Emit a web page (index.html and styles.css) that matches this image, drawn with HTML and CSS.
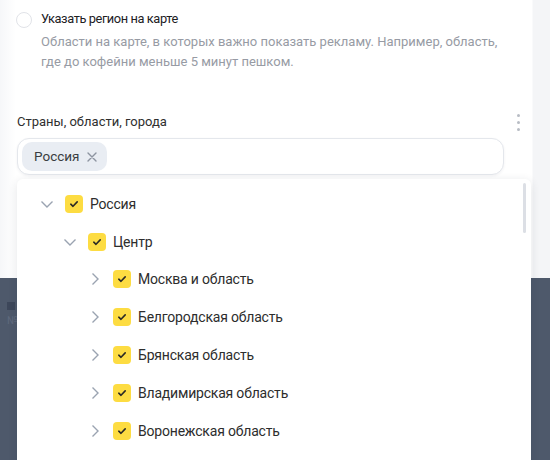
FILE: index.html
```html
<!DOCTYPE html>
<html lang="ru">
<head>
<meta charset="utf-8">
<link rel="stylesheet" href="styles.css">
</head>
<body>
<div class="page">
  <section class="form">
    <div class="radio-row">
      <span class="radio"></span>
      <div class="radio-text">
        <div class="radio-title">Указать регион на карте</div>
        <div class="radio-desc">Области на карте, в которых важно показать рекламу. Например, область, где до кофейни меньше 5 минут пешком.</div>
      </div>
    </div>
    <div class="field">
      <div class="field-head">
        <span class="field-label">Страны, области, города</span>
        <span class="kebab"><i></i><i></i><i></i></span>
      </div>
      <div class="input">
        <span class="tag">Россия <svg class="tag-x" width="10" height="10" viewBox="0 0 10 10"><path d="M1 1L9 9M9 1L1 9" stroke="currentColor" stroke-width="1.4" fill="none" stroke-linecap="round"/></svg></span>
      </div>
      <div class="dropdown">
        <div class="tree">
          <div class="row lvl0">
            <svg class="chev" width="14" height="14" viewBox="0 0 14 14"><path d="M1.5 4.5L7 10L12.5 4.5" stroke="currentColor" stroke-width="1.4" fill="none"/></svg>
            <span class="cb"><svg width="12" height="12" viewBox="0 0 12 12"><path d="M2.8 6.2L5 8.3L9.2 3.9" stroke="#2b2a26" stroke-width="1.6" fill="none" stroke-linecap="round" stroke-linejoin="round"/></svg></span>
            <span class="label">Россия</span>
          </div>
          <div class="row lvl1">
            <svg class="chev" width="14" height="14" viewBox="0 0 14 14"><path d="M1.5 4.5L7 10L12.5 4.5" stroke="currentColor" stroke-width="1.4" fill="none"/></svg>
            <span class="cb"><svg width="12" height="12" viewBox="0 0 12 12"><path d="M2.8 6.2L5 8.3L9.2 3.9" stroke="#2b2a26" stroke-width="1.6" fill="none" stroke-linecap="round" stroke-linejoin="round"/></svg></span>
            <span class="label">Центр</span>
          </div>
          <div class="row lvl2">
            <svg class="chev" width="14" height="14" viewBox="0 0 14 14"><path d="M4.5 1.5L10 7L4.5 12.5" stroke="currentColor" stroke-width="1.4" fill="none"/></svg>
            <span class="cb"><svg width="12" height="12" viewBox="0 0 12 12"><path d="M2.8 6.2L5 8.3L9.2 3.9" stroke="#2b2a26" stroke-width="1.6" fill="none" stroke-linecap="round" stroke-linejoin="round"/></svg></span>
            <span class="label">Москва и область</span>
          </div>
          <div class="row lvl2">
            <svg class="chev" width="14" height="14" viewBox="0 0 14 14"><path d="M4.5 1.5L10 7L4.5 12.5" stroke="currentColor" stroke-width="1.4" fill="none"/></svg>
            <span class="cb"><svg width="12" height="12" viewBox="0 0 12 12"><path d="M2.8 6.2L5 8.3L9.2 3.9" stroke="#2b2a26" stroke-width="1.6" fill="none" stroke-linecap="round" stroke-linejoin="round"/></svg></span>
            <span class="label">Белгородская область</span>
          </div>
          <div class="row lvl2">
            <svg class="chev" width="14" height="14" viewBox="0 0 14 14"><path d="M4.5 1.5L10 7L4.5 12.5" stroke="currentColor" stroke-width="1.4" fill="none"/></svg>
            <span class="cb"><svg width="12" height="12" viewBox="0 0 12 12"><path d="M2.8 6.2L5 8.3L9.2 3.9" stroke="#2b2a26" stroke-width="1.6" fill="none" stroke-linecap="round" stroke-linejoin="round"/></svg></span>
            <span class="label">Брянская область</span>
          </div>
          <div class="row lvl2">
            <svg class="chev" width="14" height="14" viewBox="0 0 14 14"><path d="M4.5 1.5L10 7L4.5 12.5" stroke="currentColor" stroke-width="1.4" fill="none"/></svg>
            <span class="cb"><svg width="12" height="12" viewBox="0 0 12 12"><path d="M2.8 6.2L5 8.3L9.2 3.9" stroke="#2b2a26" stroke-width="1.6" fill="none" stroke-linecap="round" stroke-linejoin="round"/></svg></span>
            <span class="label">Владимирская область</span>
          </div>
          <div class="row lvl2">
            <svg class="chev" width="14" height="14" viewBox="0 0 14 14"><path d="M4.5 1.5L10 7L4.5 12.5" stroke="currentColor" stroke-width="1.4" fill="none"/></svg>
            <span class="cb"><svg width="12" height="12" viewBox="0 0 12 12"><path d="M2.8 6.2L5 8.3L9.2 3.9" stroke="#2b2a26" stroke-width="1.6" fill="none" stroke-linecap="round" stroke-linejoin="round"/></svg></span>
            <span class="label">Воронежская область</span>
          </div>
        </div>
        <div class="scrollbar"></div>
      </div>
    </div>
  </section>
  <section class="dark">
    <div class="dark-icon"></div>
    <div class="dark-text">№</div>
  </section>
</div>
</body>
</html>
```

FILE: styles.css
```css
* { box-sizing: border-box; }
html, body { margin: 0; padding: 0; }
body {
  width: 550px;
  height: 460px;
  overflow: hidden;
  background: #ffffff;
  font-family: Roboto, "Liberation Sans", sans-serif;
  font-size: 14px;
  color: #222;
}
.page { display: flex; flex-direction: column; height: 460px; }
.form {
  position: relative;
  z-index: 2;
  height: 278px;
  padding: 9px 0 0 16px;
  background: linear-gradient(90deg, #f6f7f9 0, #ffffff 16px, #ffffff 532px, #f4f5f7 533px);
}
.radio-row { display: flex; gap: 9px; }
.radio {
  flex: none;
  width: 16px; height: 16px;
  margin-top: 3px;
  border: 1px solid #e1e3e8;
  border-radius: 50%;
  background: #fff;
}
.radio-title { font-size: 12.8px; letter-spacing: -0.4px; line-height: 20px; color: #21201f; }
.radio-desc {
  margin-top: 3px;
  font-size: 13px;
  line-height: 20px;
  color: #979ba4;
  width: 460px;
}
.field { position: relative; margin-top: 40px; margin-left: 1px; width: 514px; }
.field-head {
  display: flex; justify-content: space-between; align-items: center;
  height: 20px;
}
.field-label { font-size: 13px; color: #2f2f2f; line-height: 20px; }
.kebab {
  display: flex; flex-direction: column; gap: 4px;
  margin-right: 11px;
}
.kebab i { display: block; width: 3px; height: 3px; border-radius: 50%; background: #b8bcc4; }
.input {
  margin-top: 6px;
  width: 487px;
  height: 37px;
  border: 1px solid #e4e7ec;
  border-radius: 12px;
  padding: 3px 4px;
  box-shadow: 0 1px 3px rgba(30, 40, 60, 0.06);
  background: #fff;
}
.tag {
  display: inline-flex; align-items: center; gap: 8px;
  height: 29px;
  padding: 0 10px 0 12px;
  border-radius: 10px;
  background: #e9edf3;
  color: #3a3d42;
  font-size: 13.5px;
  line-height: 29px;
}
.tag-x { color: #8d94a0; }
.dropdown {
  position: absolute;
  top: 67px; left: 0;
  width: 514px; height: 290px;
  background: #fff;
  border-radius: 6px 6px 0 0;
  box-shadow: 0 2px 10px rgba(30, 40, 60, 0.12);
  padding-top: 6px;
}
.tree { display: flex; flex-direction: column; }
.row {
  display: flex; align-items: center;
  height: 37.8px;
}
.row.lvl0 { padding-left: 23px; }
.row.lvl1 { padding-left: 46px; }
.row.lvl2 { padding-left: 71px; }
.chev { color: #9aa3b1; flex: none; }
.row.lvl2 .chev { margin-right: 2px; }
.cb {
  display: inline-flex; align-items: center; justify-content: center;
  width: 18px; height: 18px;
  margin-left: 11px;
  border-radius: 4px;
  background: #fddc42;
  flex: none;
}
.row.lvl2 .cb { margin-left: 9px; }
.label { margin-left: 7px; color: #2d2d2d; line-height: 20px; letter-spacing: -0.2px; }
.scrollbar {
  position: absolute;
  top: 4px; right: 5px;
  width: 3px; height: 50px;
  border-radius: 2px;
  background: #dcdfe5;
}
.dark {
  flex: 1;
  background: #4e596b;
  position: relative;
  z-index: 1;
}
.dark-icon {
  position: absolute; left: 7px; top: 24px;
  width: 8px; height: 8px;
  background: #3d475a;
}
.dark-text {
  position: absolute; left: 7px; top: 36px;
  color: #5f6a7d; font-size: 11px;
}
```
